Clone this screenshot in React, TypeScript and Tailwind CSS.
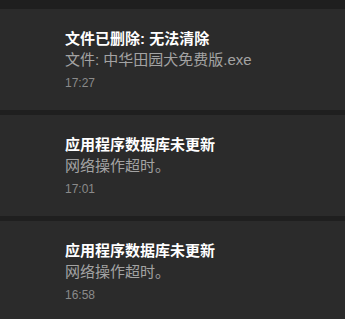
import React from 'react';

const NOTIFICATIONS = [
  { id: 1, title: '文件已删除: 无法清除', detail: '文件: 中华田园犬免费版.exe', time: '17:27' },
  { id: 2, title: '应用程序数据库未更新', detail: '网络操作超时。', time: '17:01' },
  { id: 3, title: '应用程序数据库未更新', detail: '网络操作超时。', time: '16:58' },
];

const FONT = "font-['Segoe_UI','Liberation_Sans','Noto_Sans_CJK_SC',sans-serif]";

export default function App() {
  return (
    <div className={`w-[345px] h-[319px] overflow-hidden bg-[#1f1f1f] pt-[9px] flex flex-col gap-[5px] ${FONT}`}>
      {NOTIFICATIONS.map((n) => (
        <div key={n.id} className="h-[101px] shrink-0 bg-[#2b2b2b] pl-[65px] pt-[20px]">
          <p className="text-[15px] leading-[20px] font-bold text-white">{n.title}</p>
          <p className="text-[15px] leading-[22px] text-[#a3a3a3]">{n.detail}</p>
          <p className="mt-[4px] text-[12px] leading-[16px] text-[#8a8a8a]">{n.time}</p>
        </div>
      ))}
    </div>
  );
}
